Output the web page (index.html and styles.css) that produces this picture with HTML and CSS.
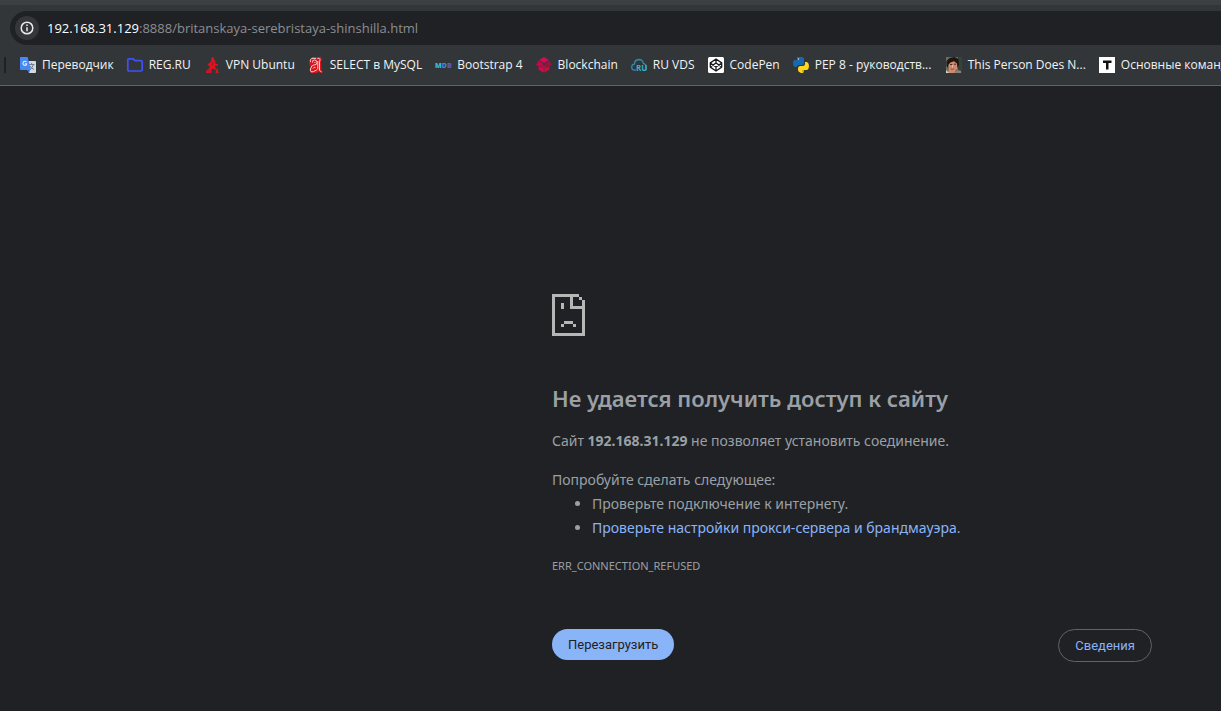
FILE: index.html
```html
<!DOCTYPE html>
<html lang="ru">
<head>
<meta charset="utf-8">
<title>192.168.31.129</title>
<link rel="stylesheet" href="styles.css">
</head>
<body>
<header class="toolbar">
  <div class="omnibox">
    <button class="site-info" type="button" aria-label="Сведения о сайте">
      <svg width="16" height="16" viewBox="0 0 16 16"><circle cx="8" cy="8" r="5.8" fill="none" stroke="#e8eaed" stroke-width="1.5"/><path d="M8 7.2v4M8 4.6v1.5" stroke="#e8eaed" stroke-width="1.5"/></svg>
    </button>
    <div class="url"><span class="host">192.168.31.129</span>:8888/britanskaya-serebristaya-shinshilla.html</div>
  </div>
  <nav class="bookmarks">
    <span class="divider"></span>
    <a class="bookmark" href="#"><svg class="icon" viewBox="0 0 16 16"><path d="M6 4h9.2q.8 0 .8.8V15q0 1-.9 1H9z" fill="#d5d8dd"/><path d="M7 13h3l-1 3z" fill="#3367d6"/><path d="M9 7.5h5.500M11.600 6v1.500M13.400 7.500q-.8 3.500-3.500 5M10.300 9q1 2.500 3.700 3.500" fill="none" stroke="#6f7f91"/><path d="M.8 0h6.800L11 13H.8Q0 13 0 12.200V.8Q0 0 .8 0z" fill="#4688f4"/><path d="M6.500 5Q5 3.700 3.600 4.700 2.200 6.200 3.500 7.800 5.200 9 6.600 7.600V6.700H4.900" fill="none" stroke="#e4eeff" stroke-width="1.100"/></svg><span class="label">Переводчик</span></a>
    <a class="bookmark" href="#"><svg class="icon" viewBox="0 0 16 16"><path d="M1.800 1.800h4.400L8 3.700h6q1.200 0 1.200 1.200v7.900q0 1.200-1.200 1.200H2q-1.200 0-1.200-1.200V3q0-1.200 1-1.200z" fill="none" stroke="#3f51f5" stroke-width="1.700"/></svg><span class="label">REG.RU</span></a>
    <a class="bookmark" href="#"><svg class="icon" viewBox="0 0 16 16"><path d="M8 0l2 .8v2L11.500 4 11 6l3 1.500-.5 1.500-2.500-.5.500 2.500 2.500 1.500V15l1 1h-3.500l.5-2.500L9 11.500l-2 1.500 1 2.500L5.500 16H2l.5-2.500L5 11.500 6 9 3.500 8.500 5 6l2.500-2L7 2z" fill="#e0121f"/><path d="M8 5l1 1.500-1 2M3.500 14l2-.5M11.500 11.500l1 2" stroke="#6b2024" stroke-width=".7" fill="none"/></svg><span class="label">VPN Ubuntu</span></a>
    <a class="bookmark" href="#"><svg class="icon" viewBox="0 0 16 16"><path d="M4 0h9l1 2-1 2 .5 9L15 15l-2 1-2-1-3 1H3l-2-3 2-3-2-3 1-4z" fill="#d9151d"/><path d="M2.500 5Q1.500 1.500 5 1.300L8 1.500M4.500 5.500Q4 3 6.500 3T9 5.500 6 8 2.500 12 5.500 14.500 9 12.500M5 11.500q1-2 2.500-1M9.500 1.500q2-.8 2.500 1L11.500 5v8.500l2 1.500M9.800 4v8.500M7 5v1" fill="none" stroke="#f8e2df" stroke-width=".9"/></svg><span class="label">SELECT в MySQL</span></a>
    <a class="bookmark" href="#"><svg class="icon" viewBox="0 0 16 16"><text class="mdb" x="0" y="11"><tspan fill="#35b9d4">M</tspan><tspan fill="#4186d7">D</tspan><tspan fill="#6756be">B</tspan></text></svg><span class="label">Bootstrap 4</span></a>
    <a class="bookmark" href="#"><svg class="icon" viewBox="0 0 16 16"><path d="M8 0l5 3-5 3-5-3z" fill="#d40b5b"/><path d="M2.500 3.600L7.600 6.700 5 11 0 8z" fill="#b90c48"/><path d="M13.500 3.600L16 8l-5 3-2.600-4.300z" fill="#99133f"/><path d="M7.700 7.200v8.600L2.500 12.600V10L5.500 11z" fill="#cf0b48"/><path d="M8.300 7.200v8.600l5.200-3.200V10L10.500 11z" fill="#c6103e"/></svg><span class="label">Blockchain</span></a>
    <a class="bookmark" href="#"><svg class="icon" viewBox="0 0 16 16"><path d="M5 13.200H3.500Q.7 13 .7 10.200q0-2.700 2.700-3Q3.500 3 7.600 2.500q4 0 4.700 3.800 2.600.5 2.900 3.300V13" fill="none" stroke="#2f8da5" stroke-width="1.300"/><text class="cloud-text" x="5" y="14" fill="#38b0c9">RU</text></svg><span class="label">RU VDS</span></a>
    <a class="bookmark" href="#"><svg class="icon" viewBox="0 0 16 16"><rect width="16" height="16" rx="1.500" fill="#fff"/><path d="M8 2l5.700 3.900v4.200L8 14l-5.700-3.900V5.900zM2.300 6.100L8 10l5.700-3.900M2.300 9.900L8 6l5.700 3.900M8 2v4M8 10v4" fill="none" stroke="#17191c" stroke-width="1.300" stroke-linejoin="round"/></svg><span class="label">CodePen</span></a>
    <a class="bookmark" href="#"><svg class="icon" viewBox="0 0 16 16"><path d="M4 0h5q2 0 2 2v4Q11 8 9 8H6Q4 8 3.500 10H2Q0 9 0 6t2-3h2z" fill="#1768ad"/><path d="M12 5h2q2 1 2 4t-2 4h-3v1q0 2-3 2-3-1-3-3v-1.500Q5 9 7 9h3q2 0 2-2z" fill="#ffd71f"/><circle cx="5.500" cy="2" r=".7" fill="#c9e7fb"/><circle cx="10" cy="14" r=".7" fill="#735e14"/></svg><span class="label long">PEP 8 - руководств...</span></a>
    <a class="bookmark" href="#"><svg class="icon" viewBox="0 0 16 16"><path fill="#6b6e5e" d="M0 0h16v16H0z"/><path fill="#35433f" d="M12 0h4v16h-4z"/><path d="M2 16l1-4-1-6 3-3h5l2 4-1 5-2 2 1 2z" fill="#d08a70"/><path d="M.5 9V4l3-3 5-1 4 2 .5 6-1.500 3-.5-4.500L8 4.200 4.500 5.500 2.500 7.500 2 11z" fill="#201511"/><path d="M4 7.500h2.300M8 7.200h2" stroke="#4f2921"/><path d="M6.500 8v2.500" stroke="#eeb79b"/><path d="M4.500 12q2 .8 3.700-.3" fill="none" stroke="#984139" stroke-width=".9"/><path d="M0 13l3 3H0z" fill="#d9d3c8"/><path d="M8 16l4-3 3 1v2z" fill="#8b8177"/></svg><span class="label long">This Person Does N...</span></a>
    <a class="bookmark" href="#"><svg class="icon" viewBox="0 0 16 16"><path fill="#fff" d="M0 0h16v16H0z"/><path d="M4 3.500h8.500V6H9.500v6.500H7V6H4z" fill="#111"/></svg><span class="label">Основные команды</span></a>
  </nav>
</header>
<main class="page">
  <section class="error">
    <svg class="sad" viewBox="0 0 11 14" shape-rendering="crispEdges" aria-hidden="true"><path fill="#b6b6b7" d="M0 0h9v1H7v3h3v1H6V1H1v12h9V2h1v12H0zM9 1h1v1H9zM3 3h1v2H3zM4 9h3v1H4zM3 10h1v1H3zM7 10h1v1H7z"/></svg>
    <h1>Не удается получить доступ к сайту</h1>
    <p>Сайт <strong>192.168.31.129</strong> не позволяет установить соединение.</p>
    <div class="tips">
      <p>Попробуйте сделать следующее:</p>
      <ul>
        <li>Проверьте подключение к интернету.</li>
        <li><a href="#">Проверьте настройки прокси-сервера и брандмауэра</a>.</li>
      </ul>
    </div>
    <div class="code">ERR_CONNECTION_REFUSED</div>
    <div class="actions">
      <button class="reload" type="button">Перезагрузить</button>
      <button class="details" type="button">Сведения</button>
    </div>
  </section>
</main>
</body>
</html>
```
FILE: styles.css
```css
* { box-sizing: border-box; }
body {
  margin: 0;
  min-height: 100vh;
  background: #202124;
  color: #9aa0a6;
  font-family: "Noto Sans", "Open Sans", sans-serif;
  font-size: 14px;
  line-height: 24px;
  overflow-x: hidden;
}
.toolbar {
  background: #323639;
  border-top: 5px solid #3c4043;
  border-bottom: 1px solid #5f6368;
  padding-top: 6px;
}
.omnibox {
  display: flex;
  align-items: center;
  gap: 8px;
  height: 34px;
  margin-left: 10px;
  padding-left: 5px;
  border-radius: 17px 0 0 17px;
  background: #202124;
}
.site-info {
  display: flex;
  align-items: center;
  justify-content: center;
  width: 24px;
  height: 24px;
  padding: 0;
  border: 0;
  border-radius: 50%;
  background: #35363a;
}
.url {
  color: #8b8e92;
  font-family: "Open Sans", sans-serif;
  font-size: 13px;
  white-space: nowrap;
}
.host { color: #fff; }
.bookmarks {
  display: flex;
  align-items: center;
  gap: 13px;
  height: 40px;
  padding-left: 4px;
  overflow: hidden;
}
.divider { flex: none; width: 2px; height: 16px; margin-right: 1px; background: #202124; }
.bookmark {
  display: flex;
  flex: none;
  align-items: center;
  gap: 6px;
  color: #f1f3f4;
  font-family: "Open Sans", sans-serif;
  font-size: 12px;
  line-height: 16px;
  text-decoration: none;
}
.icon { flex: none; width: 16px; height: 16px; overflow: visible; }
.mdb { font: 800 7px "Open Sans", sans-serif; }
.cloud-text { font: 700 8px "Open Sans", sans-serif; }
.label { white-space: nowrap; }
.long { min-width: 118px; }
.page {
  display: flex;
  justify-content: flex-end;
  padding: 208px 69px 48px 24px;
}
.error { width: 100%; max-width: 600px; }
.sad { display: block; width: 33px; height: 42px; }
h1 {
  margin: 48px 0 17px;
  font-size: 22px;
  font-weight: 600;
  line-height: 28px;
}
p { margin: 0; }
.tips { margin-top: 15px; }
ul { margin: 0; padding-left: 40px; }
a { color: #8ab4f8; text-decoration: none; }
.code { margin-top: 14px; font-size: 11px; }
.actions {
  display: flex;
  justify-content: space-between;
  align-items: flex-start;
  margin-top: 51px;
}
.actions button {
  border-radius: 17px;
  padding: 0 16px;
  font: 13px/31px Roboto, sans-serif;
}
.reload { border: 0; background: #8ab4f8; color: #202124; }
.details { border: 1px solid #5f6368; background: transparent; color: #8ab4f8; }
```
